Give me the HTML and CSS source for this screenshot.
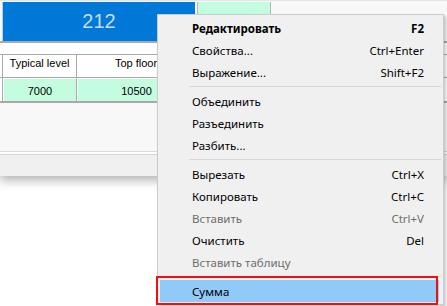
FILE: index.html
```html
<!DOCTYPE html>
<html>
<head>
<meta charset="utf-8">
<link rel="stylesheet" href="styles.css">
</head>
<body>
<div class="window">
  <div class="row-a">
    <div class="edge"></div>
    <div class="cell-blue">212</div>
    <div class="cell-green"></div>
  </div>
  <div class="row-b"></div>
  <div class="row row-head">
    <div class="c c0"></div>
    <div class="c c1">Typical level</div>
    <div class="c c2">Top floor</div>
    <div class="c c3"></div>
  </div>
  <div class="row row-data">
    <div class="c c0"></div>
    <div class="c c1 g">7000</div>
    <div class="c c2 g">10500</div>
    <div class="c c3"></div>
  </div>
  <div class="filler"></div>
  <div class="status"></div>
</div>

<div class="menu">
  <div class="item bold"><span>Редактировать</span><span>F2</span></div>
  <div class="item"><span>Свойства...</span><span>Ctrl+Enter</span></div>
  <div class="item"><span>Выражение...</span><span>Shift+F2</span></div>
  <div class="sep"></div>
  <div class="item"><span>Объединить</span></div>
  <div class="item"><span>Разъединить</span></div>
  <div class="item"><span>Разбить...</span></div>
  <div class="sep"></div>
  <div class="item"><span>Вырезать</span><span>Ctrl+X</span></div>
  <div class="item"><span>Копировать</span><span>Ctrl+C</span></div>
  <div class="item dis"><span>Вставить</span><span>Ctrl+V</span></div>
  <div class="item"><span>Очистить</span><span>Del</span></div>
  <div class="item dis"><span>Вставить таблицу</span></div>
  <div class="sep"></div>
  <div class="item hl"><span>Сумма</span></div>
</div>
<div class="annot"></div>
</body>
</html>
```

FILE: styles.css
```css
html, body {
  margin: 0;
  padding: 0;
  background: #ffffff;
  overflow: hidden;
}
body {
  width: 447px;
  height: 306px;
  position: relative;
  font-family: "Liberation Sans", Arial, sans-serif;
}
.window {
  background: #f8f8f8;
  box-shadow: 0 5px 9px rgba(0, 0, 0, 0.28);
  height: 176px;
}
.row-a {
  display: flex;
  height: 39px;
  padding-top: 2px;
  background: #f8f8f8;
  border-top: 0;
  border-bottom: 2px solid #a9a9a9;
  box-shadow: inset 0 1px 0 #dfe6ee;
}
.edge {
  width: 2px;
  border-right: 1px solid #b9cde2;
}
.cell-blue {
  width: 192px;
  background: #0078d7;
  color: #c6def5;
  font-size: 20px;
  display: flex;
  align-items: center;
  justify-content: center;
}
.cell-green {
  margin-left: 2px;
  width: 72px;
  background: #c4fce0;
  border-left: 1px solid #b8b8b8;
  border-right: 1px solid #b8b8b8;
}
.row-b {
  height: 11px;
  background: #ffffff;
  border-bottom: 1px solid #a9a9a9;
}
.row {
  display: flex;
  background: #ffffff;
}
.row-head {
  height: 22px;
  border-bottom: 1px solid #a9a9a9;
}
.row-data {
  height: 23px;
  border-bottom: 2px solid #a9a9a9;
}
.c {
  font-size: 11px;
  color: #000;
  display: flex;
  align-items: center;
  justify-content: center;
  box-sizing: border-box;
  border-right: 1px solid #a9a9a9;
}
.c0 { width: 3px; }
.c1 { width: 74px; }
.c2 { width: 119px; }
.c3 { flex: 1; border-right: 0; }
.row-head .c { padding-bottom: 6px; }
.g {
  background: #c4fce0;
  border-left: 1px solid #ffffff;
  border-top: 1px solid #ffffff;
  padding-top: 1px;
}
.filler {
  height: 48px;
  background: #f8f8f8;
  border-bottom: 1px solid #d9d9d9;
}
.status {
  height: 22px;
  background: #f0f0f0;
  border-top: 1px solid #ffffff;
  box-shadow: inset 0 1px 0 #ffffff, inset 0 2px 0 #d4d4d4;
  padding-top: 1px;
}
.menu {
  position: absolute;
  left: 157px;
  top: 14px;
  width: 285px;
  background: #f0f0f0;
  border: 1px solid #cccccc;
  box-shadow: 2px 2px 3px rgba(0, 0, 0, 0.22);
  padding: 2px 0;
  font-family: "Noto Sans", "Open Sans", sans-serif;
  font-size: 11.5px;
  color: #000;
}
.item {
  height: 22px;
  display: flex;
  align-items: center;
  justify-content: space-between;
  padding: 0 19px 0 34px;
}
.bold { font-weight: bold; }
.dis { color: #6d6d6d; }
.sep {
  height: 7px;
  margin: 0 2px 0 31px;
  background: linear-gradient(#f0f0f0 0 3px, #d7d7d7 3px 4px, #f0f0f0 4px);
}
.hl {
  background: #91c9f7;
  margin: 0 4px 0 2px;
  padding-left: 32px;
}
.annot {
  position: absolute;
  left: 156px;
  top: 276px;
  width: 278px;
  height: 25px;
  border: 2px solid #f01010;
}
```
